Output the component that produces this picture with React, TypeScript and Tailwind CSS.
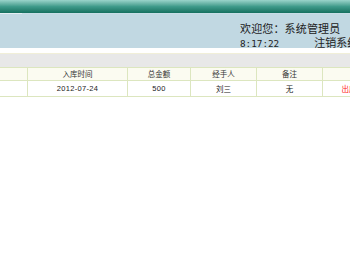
import React from 'react';

const cols = [
  { w: 'w-[28px]', label: '', value: '' },
  { w: 'w-[100px]', label: '入库时间', value: '2012-07-24' },
  { w: 'w-[63px]', label: '总金额', value: '500' },
  { w: 'w-[66px]', label: '经手人', value: '刘三' },
  { w: 'w-[66px]', label: '备注', value: '无' },
  { w: 'w-[52px]', label: '', value: '出库' },
];

const cjk = "font-['Noto_Sans_CJK_SC',sans-serif]";

export default function App() {
  return (
    <div className="w-[350px] h-[280px] overflow-hidden bg-white">
      {/* top bar */}
      <div className="h-[13px] bg-gradient-to-b from-[#9ad4cb] via-[#3f9b8b] to-[#14705f]" />
      <div className="flex h-px bg-[#c8dde6]">
        <div className="w-[22px] bg-[#e4eef2]" />
      </div>
      {/* welcome area */}
      <div className="h-[34px] bg-[#c1d8e2] pl-[240px] pt-[8px] text-[#222]">
        <div className={`${cjk} text-[11px] leading-[12px] tracking-[0.15px] whitespace-nowrap`}>欢迎您：系统管理员</div>
        <div className="flex items-baseline mt-[2px] whitespace-nowrap">
          <span className="font-['DejaVu_Sans_Mono',monospace] text-[9.3px] leading-[12px]">8:17:22</span>
          <span className={`${cjk} text-[11px] leading-[12px] ml-[35px]`}>注销系统</span>
        </div>
      </div>
      <div className="h-[5px] bg-white" />
      <div className="h-px bg-[#f1efd8]" />
      <div className="h-[13px] bg-[#e8e8e8]" />
      {/* table */}
      <div className="w-[375px]">
        <div className="flex h-[14px] bg-[#fbfbf1] border-y border-[#dce6bf]">
          {cols.map((c, i) => (
            <div
              key={i}
              className={`${c.w} shrink-0 flex items-center justify-center ${cjk} text-[7.5px] text-[#333] ${i < cols.length - 1 ? 'border-r border-[#dce6bf]' : ''}`}
            >
              {c.label}
            </div>
          ))}
        </div>
        <div className="flex h-[16px] bg-white border-b border-[#dce6bf]">
          {cols.map((c, i) => (
            <div
              key={i}
              className={`${c.w} shrink-0 flex items-center justify-center text-[7.5px] ${
                i === 1 || i === 2 ? "font-['Liberation_Sans',sans-serif] tracking-[0.3px]" : cjk
              } ${i === cols.length - 1 ? 'text-[#ff1a1a]' : 'text-[#222]'} ${
                i < cols.length - 1 ? 'border-r border-[#dce6bf]' : ''
              }`}
            >
              {c.value}
            </div>
          ))}
        </div>
      </div>
    </div>
  );
}
